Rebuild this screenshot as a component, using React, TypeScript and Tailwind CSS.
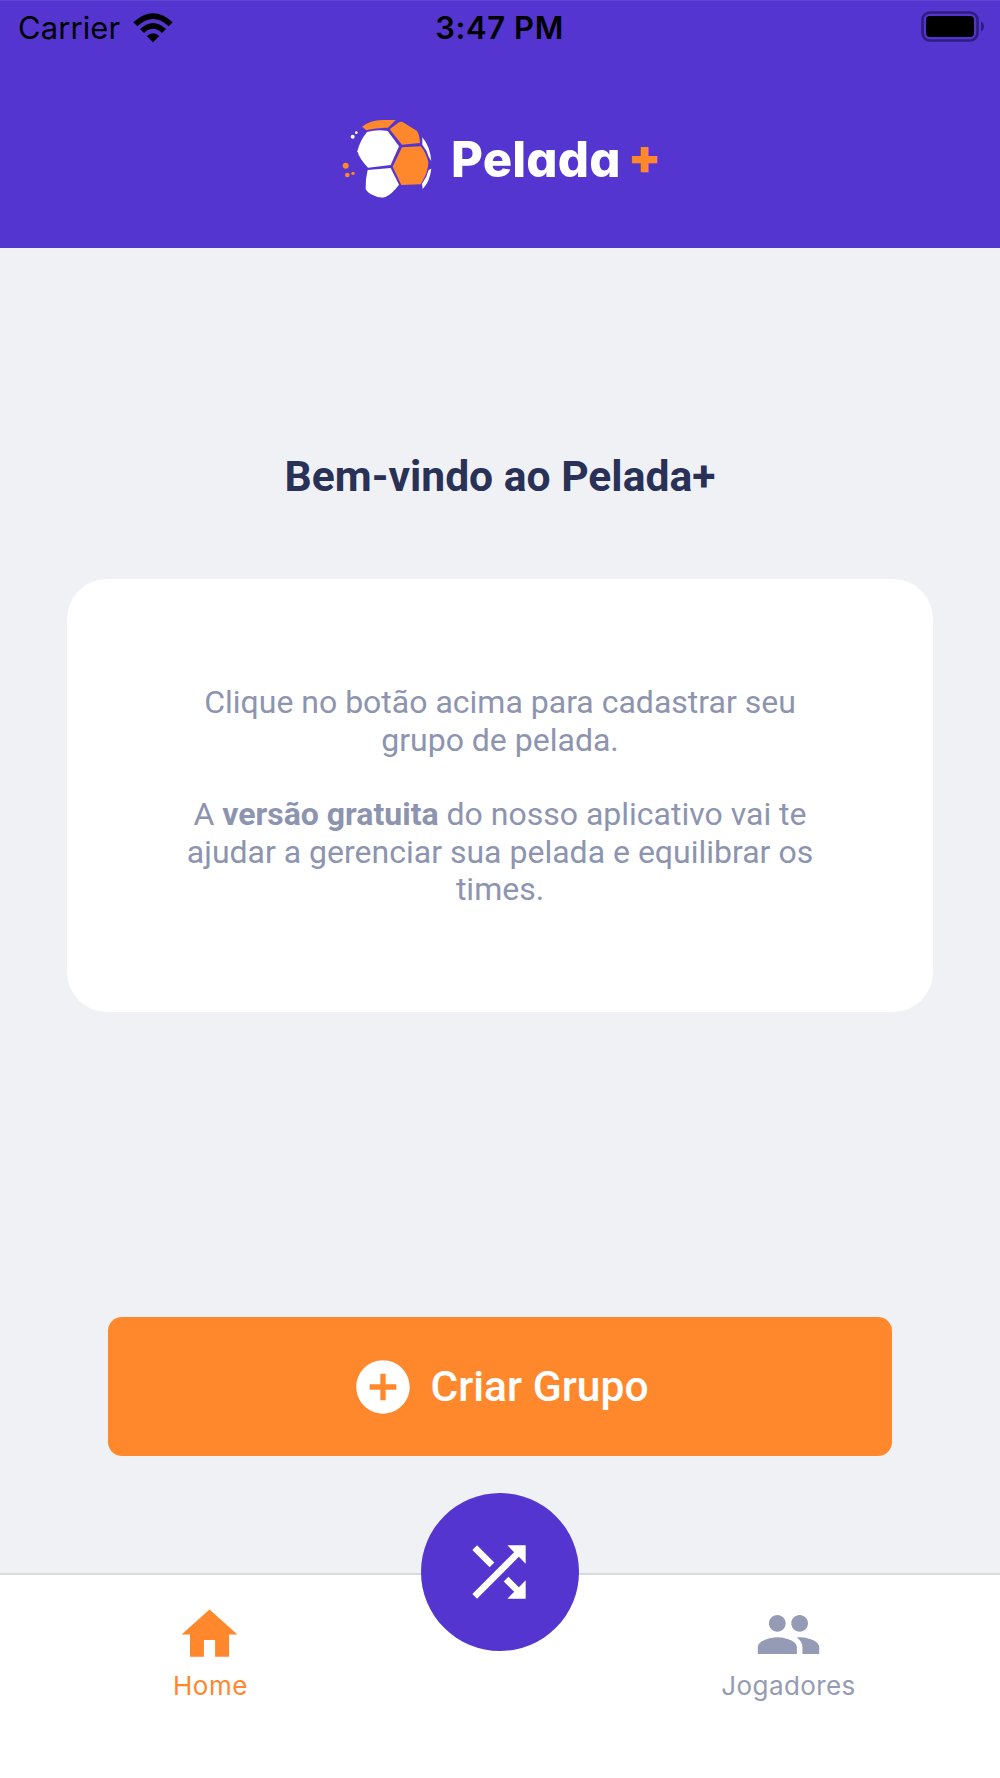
import { MdAddCircle, MdHome, MdPeople, MdShuffle } from "react-icons/md";

function StatusBar() {
  return (
    <div className="grid grid-cols-3 items-center h-[53px] pl-[18px] pr-[16px] font-['Inter',sans-serif] text-[31px] leading-[53px] text-black">
      <div className="flex items-center gap-[13px]">
        <span className="tracking-[0.1px]">Carrier</span>
        <svg className="w-10 h-[30px]" viewBox="0 0 120 90">
          <path d="M1 28Q60 -26 119 28L107 40Q60 -4 13 40Z" />
          <path d="M21 48Q60 12 99 48L87 60Q60 35 33 60Z" />
          <path d="M41 69Q60 53 79 69L60 88Z" />
        </svg>
      </div>
      <span className="-ml-[3px] text-center font-semibold tracking-[0.6px]">3:47 PM</span>
      <div className="flex justify-end">
        <svg className="w-[63px] h-[31px] -mt-[2px]" viewBox="0 0 63 31">
          <rect x="1.5" y="1.5" width="55" height="28" rx="7.5" fill="none" stroke="#2f1c80" strokeWidth="2.6" />
          <rect x="5" y="5" width="48" height="21" rx="4" />
          <path d="M60 10.500Q63 12 63 15.500T60 20.500Z" fill="#2f1c80" />
        </svg>
      </div>
    </div>
  );
}

function Ball() {
  return (
    <svg className="w-[120px] h-[105px]" viewBox="0 0 360 315">
      <g fill="#ff872c">
        <path d="M96 65Q120 46 158 45H197L174 68Q140 67 109 76Z" />
        <path d="M179 73L207 52Q213 49 219 52L260 77Q268 85 270 114L216 119Z" />
        <path d="M216 127L272 124Q288 142 295 172Q295 202 272 238L214 240L188 185Z" />
        <circle cx="47" cy="182" r="9" />
        <circle cx="52" cy="210" r="7" />
        <circle cx="69" cy="205" r="5" />
      </g>
      <g fill="#fff">
        <path d="M111 81Q141 73 173 78L207 124L182 180L114 188Q89 163 82 139Q89 108 111 81Z" />
        <path d="M113 195L182 189L207 239Q186 267 166 276Q149 281 130 271Q112 263 107 252Q106 221 113 195Z" />
        <path d="M277 97Q300 124 304 168L296 155Q291 136 277 119Z" />
        <path d="M276 236Q290 218 296 195L304 191Q299 231 278 252Z" />
        <circle cx="68" cy="95" r="6" />
        <circle cx="79" cy="83" r="4" />
      </g>
    </svg>
  );
}

function Header() {
  return (
    <header className="h-[248px] bg-[#5535d0] border-t border-[#6446d5]">
      <StatusBar />
      <div className="flex items-center h-[105px] mt-[51px] ml-[330px] font-['Inter',sans-serif]">
        <Ball />
        <span className="mt-1 ml-px font-extrabold text-[49px] leading-[58px] tracking-[0.2px] text-white [font-feature-settings:'cv11']">
          Pelada
        </span>
        <span className="ml-[7px] -mt-px font-black text-[48px] leading-[58px] text-[#ff872c]">+</span>
      </div>
    </header>
  );
}

export default function App() {
  return (
    <div className="flex flex-col w-[1000px] h-[1778px] bg-[#f0f1f5] font-['Roboto',sans-serif] overflow-hidden">
      <Header />

      <main className="flex-1 flex flex-col items-center">
        <h1 className="mt-[203px] font-bold text-[42.6px] leading-[50px] text-[#293156]">
          Bem-vindo ao Pelada+
        </h1>

        <div className="mt-[78px] w-[866px] h-[433px] pt-[2px] rounded-[40px] bg-white flex flex-col items-center justify-center gap-[37px] text-center text-[32px] leading-[37.4px] text-[#8d94af]">
          <p>
            Clique no botão acima para cadastrar seu
            <br />
            grupo de pelada.
          </p>
          <p>
            A <strong className="font-bold">versão gratuita</strong> do nosso aplicativo vai te
            <br />
            ajudar a gerenciar sua pelada e equilibrar os
            <br />
            times.
          </p>
        </div>

        <button className="mt-[305px] w-[784px] h-[139px] rounded-[14px] bg-[#ff872c] flex items-center justify-center gap-[15px] text-white text-[42.6px] font-medium">
          <MdAddCircle size={64} />
          Criar Grupo
        </button>
      </main>

      <nav className="relative h-[205px] bg-white border-t-2 border-[#d8d9dc] flex justify-between font-['Inter',sans-serif] text-[26px] leading-8">
        <a className="w-[419px] pt-[26px] flex flex-col items-center text-[#ff872c]">
          <MdHome size={67} />
          <span className="mt-[2px] ml-[2px] tracking-[0.6px]">Home</span>
        </a>
        <button className="absolute left-[421px] -top-[82px] size-[158px] pr-[2px] rounded-full bg-[#5535d0] text-white flex items-center justify-center">
          <MdShuffle size={80} />
        </button>
        <a className="w-[424px] pt-[26px] flex flex-col items-center text-[#959bb4]">
          <MdPeople size={67} />
          <span className="mt-[2px] ml-px tracking-[0.4px]">Jogadores</span>
        </a>
      </nav>
    </div>
  );
}
